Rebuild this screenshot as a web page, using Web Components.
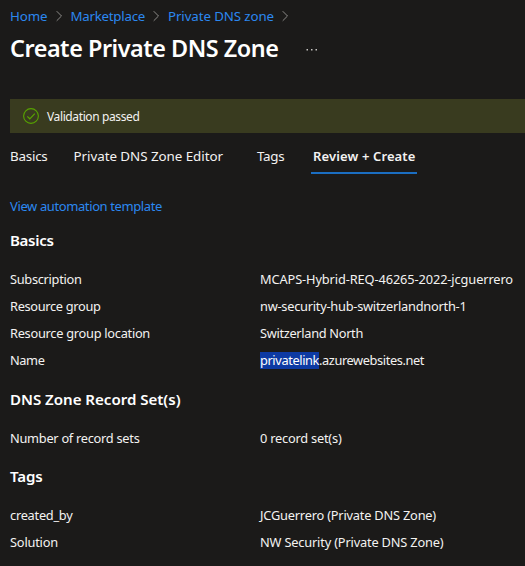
<!DOCTYPE html>
<html lang="en">
<head>
<meta charset="utf-8">
<title>Create Private DNS Zone</title>
<style>
html,body{margin:0;height:566px;overflow:hidden;background:#1b1a19}
body{font-family:"Noto Sans","Open Sans",sans-serif;font-size:12.8px;color:#f3f2f1}
</style>
</head>
<body>
<dns-blade></dns-blade>
<script>
const mount = (el, html) => { el.attachShadow({mode: 'open'}).innerHTML = html; };

// A single line whose tracking is adjusted to fill the given width.
customElements.define('fit-text', class extends HTMLElement {
  connectedCallback() {
    if (this.shadowRoot) return;
    mount(this, '<style>:host{display:inline-block;white-space:pre;flex:none}span{display:inline-block}</style><span><slot></slot></span>');
    const w = +this.getAttribute('w'), n = this.textContent.length;
    const span = this.shadowRoot.querySelector('span');
    const natural = span.getBoundingClientRect().width;
    span.style.letterSpacing = ((w - natural) / n) + 'px';
    this.style.width = w + 'px';
  }
});

customElements.define('crumb-arrow', class extends HTMLElement {
  connectedCallback() {
    mount(this, `<style>:host{display:block;width:7px;height:12px;margin:0 8px;flex:none}svg{display:block}</style>
    <svg width="7" height="12" viewBox="0 0 7 12" fill="none" stroke="#8c8a88"><path d="M.7 1.2 5.5 6 .7 10.8"/></svg>`);
  }
});

customElements.define('status-banner', class extends HTMLElement {
  connectedCallback() {
    mount(this, `<style>:host{display:flex;align-items:center;height:34px;margin:34px 0 0 10px;padding-left:13px;gap:8px;background:#393b1f;font-size:12px;line-height:34px;box-sizing:border-box}svg{flex:none}div{padding-top:2px}</style>
    <svg width="16" height="16" viewBox="0 0 16 16" fill="none" stroke="#57a300"><circle cx="8" cy="8" r="7.4" stroke-width="1.1"/><path d="m4.3 8.4 2.5 2.4 5-5.2" stroke-width="1.2"/></svg><div><slot></slot></div>`);
  }
});

customElements.define('blade-tab', class extends HTMLElement {
  connectedCallback() {
    mount(this, `<style>:host{display:block;box-sizing:border-box;height:31px;line-height:27px;font-size:13.4px;flex:none}
    :host([active]){font-weight:600;font-size:13px;border-bottom:2px solid #1b6ec2;padding:0 2px;width:106px}</style><slot></slot>`);
  }
});

customElements.define('summary-section', class extends HTMLElement {
  connectedCallback() {
    mount(this, `<style>:host{display:block}h2{margin:0;height:39px;font-size:15.1px;font-weight:600;line-height:27px;color:#fff}</style>
    <h2><slot name="title"></slot></h2><slot></slot>`);
  }
});

customElements.define('summary-row', class extends HTMLElement {
  connectedCallback() {
    mount(this, `<style>:host{display:grid;grid-template-columns:250px 1fr;height:27px;line-height:27px}div{white-space:nowrap;display:flex}</style>
    <div><slot name="label"></slot></div><div><slot></slot></div>`);
  }
});

customElements.define('dns-blade', class extends HTMLElement {
  connectedCallback() {
    mount(this, `<style>
    :host{display:flex;flex-direction:column;width:525px;height:566px;overflow:hidden}
    nav{display:flex;align-items:center;height:27px;padding:2px 0 0 10px;line-height:26px;font-size:13.3px;color:#2b88f0}
    header{display:flex;height:33px;padding:3px 0 0 10px;line-height:33px}
    h1{margin:0;font-size:23.4px;font-weight:600;color:#fff;display:flex}
    .more{margin:16px 0 0 27px;width:12px;height:3px}
    .tabs{display:flex;height:31px;margin:10px 0 0 10px}
    .link{display:block;height:27px;line-height:27px;margin:19px 0 0 10px;color:#2b88f0;font-size:13px}
    .body{margin:7px 0 0 10px;display:flex;flex-direction:column;gap:12px}
    .sel{background:#0d3aa3;color:#fff;height:17px;line-height:17px;margin-top:5px}
    .last{margin-top:-1px}
    </style>
    <nav><fit-text w="37.5">Home</fit-text><crumb-arrow></crumb-arrow><fit-text w="74.5">Marketplace</fit-text><crumb-arrow></crumb-arrow><fit-text w="106">Private DNS zone</fit-text><crumb-arrow></crumb-arrow></nav>
    <header><h1><fit-text w="268.5">Create Private DNS Zone</fit-text></h1>
      <svg class="more" viewBox="0 0 12 3" fill="#c4c2c0"><rect x=".5" y="1" width="1.5" height="1.5"/><rect x="5" y="1" width="1.5" height="1.5"/><rect x="9.5" y="1" width="1.5" height="1.5"/></svg></header>
    <status-banner><fit-text w="92.5">Validation passed</fit-text></status-banner>
    <div class="tabs">
      <blade-tab style="margin-right:26px"><fit-text w="37.5">Basics</fit-text></blade-tab>
      <blade-tab style="margin-right:34px"><fit-text w="149.5">Private DNS Zone Editor</fit-text></blade-tab>
      <blade-tab style="margin-right:26.5px"><fit-text w="27.5">Tags</fit-text></blade-tab>
      <blade-tab active><fit-text w="102.5">Review + Create</fit-text></blade-tab>
    </div>
    <a class="link"><fit-text w="152">View automation template</fit-text></a>
    <div class="body">
      <summary-section><fit-text slot="title" w="43.5">Basics</fit-text>
        <summary-row><fit-text slot="label" w="71.5">Subscription</fit-text><fit-text w="253">MCAPS-Hybrid-REQ-46265-2022-jcguerrero</fit-text></summary-row>
        <summary-row><fit-text slot="label" w="90.5">Resource group</fit-text><fit-text w="206.5">nw-security-hub-switzerlandnorth-1</fit-text></summary-row>
        <summary-row><fit-text slot="label" w="140">Resource group location</fit-text><fit-text w="103">Switzerland North</fit-text></summary-row>
        <summary-row><fit-text slot="label" w="34.5">Name</fit-text><fit-text class="sel" w="59">privatelink</fit-text><fit-text w="105">.azurewebsites.net</fit-text></summary-row>
      </summary-section>
      <summary-section><fit-text slot="title" w="170.5">DNS Zone Record Set(s)</fit-text>
        <summary-row><fit-text slot="label" w="129.5">Number of record sets</fit-text><fit-text w="81.5">0 record set(s)</fit-text></summary-row>
      </summary-section>
      <summary-section class="last"><fit-text slot="title" w="32.5">Tags</fit-text>
        <summary-row><fit-text slot="label" w="62.5">created_by</fit-text><fit-text w="176">JCGuerrero (Private DNS Zone)</fit-text></summary-row>
        <summary-row><fit-text slot="label" w="48">Solution</fit-text><fit-text w="183.5">NW Security (Private DNS Zone)</fit-text></summary-row>
      </summary-section>
    </div>`);
  }
});
</script>
</body>
</html>
